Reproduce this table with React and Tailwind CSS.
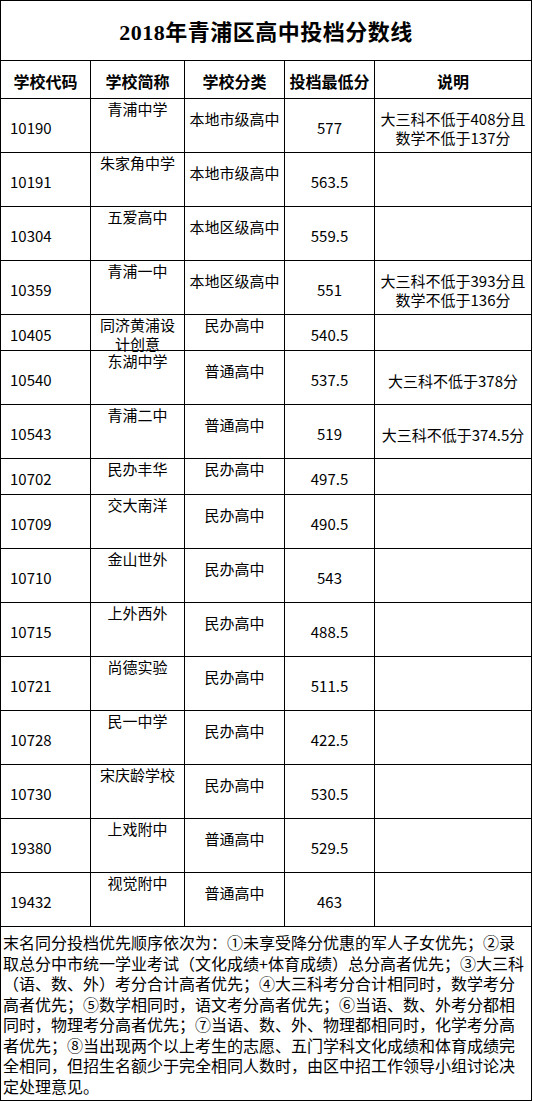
import React from "react";

const rows = [
  { code: "10190", name: ["青浦中学"], cat: "本地市级高中", score: "577", note: ["大三科不低于408分且", "数学不低于137分"] },
  { code: "10191", name: ["朱家角中学"], cat: "本地市级高中", score: "563.5" },
  { code: "10304", name: ["五爱高中"], cat: "本地区级高中", score: "559.5" },
  { code: "10359", name: ["青浦一中"], cat: "本地区级高中", score: "551", note: ["大三科不低于393分且", "数学不低于136分"] },
  { code: "10405", name: ["同济黄浦设", "计创意"], cat: "民办高中", score: "540.5", short: true },
  { code: "10540", name: ["东湖中学"], cat: "普通高中", score: "537.5", note: ["大三科不低于378分"] },
  { code: "10543", name: ["青浦二中"], cat: "普通高中", score: "519", note: ["大三科不低于374.5分"] },
  { code: "10702", name: ["民办丰华"], cat: "民办高中", score: "497.5", short: true },
  { code: "10709", name: ["交大南洋"], cat: "民办高中", score: "490.5" },
  { code: "10710", name: ["金山世外"], cat: "民办高中", score: "543" },
  { code: "10715", name: ["上外西外"], cat: "民办高中", score: "488.5" },
  { code: "10721", name: ["尚德实验"], cat: "民办高中", score: "511.5" },
  { code: "10728", name: ["民一中学"], cat: "民办高中", score: "422.5" },
  { code: "10730", name: ["宋庆龄学校"], cat: "民办高中", score: "530.5" },
  { code: "19380", name: ["上戏附中"], cat: "普通高中", score: "529.5" },
  { code: "19432", name: ["视觉附中"], cat: "普通高中", score: "463" },
];

const footer = [
  "末名同分投档优先顺序依次为：①未享受降分优惠的军人子女优先；②录",
  "取总分中市统一学业考试（文化成绩+体育成绩）总分高者优先；③大三科",
  "（语、数、外）考分合计高者优先；④大三科考分合计相同时，数学考分",
  "高者优先；⑤数学相同时，语文考分高者优先；⑥当语、数、外考分都相",
  "同时，物理考分高者优先；⑦当语、数、外、物理都相同时，化学考分高",
  "者优先；⑧当出现两个以上考生的志愿、五门学科文化成绩和体育成绩完",
  "全相同，但招生名额少于完全相同人数时，由区中招工作领导小组讨论决",
  "定处理意见。",
];

export default function App() {
  return (
    <div className="bg-white min-h-[1101px] text-black font-['Noto_Sans_CJK_SC',sans-serif]">
      <div className="w-[532px] border-l border-t border-black">
        {/* title */}
        <div className="h-[60px] border-b border-r border-black flex items-center justify-center pt-[3px]">
          <span className="text-[22px] font-bold font-['Liberation_Serif','Noto_Sans_CJK_SC',serif] tracking-[0.5px]">
            2018年青浦区高中投档分数线
          </span>
        </div>
        {/* header */}
        <div className="h-[38px] border-b border-black flex text-[16px] font-bold">
          <div className="w-[90px] border-r border-black flex items-center justify-center pt-[2px]">学校代码</div>
          <div className="w-[94px] border-r border-black flex items-center justify-center pt-[2px]">学校简称</div>
          <div className="w-[100px] border-r border-black flex items-center justify-center pt-[2px]">学校分类</div>
          <div className="w-[90px] border-r border-black flex items-center justify-center pt-[2px]">投档最低分</div>
          <div className="w-[157px] border-r border-black flex items-center justify-center pt-[2px]">说明</div>
        </div>
        {/* data rows */}
        {rows.map((r) => (
          <div
            key={r.code}
            className={`${r.short ? "h-[36px]" : "h-[54px]"} border-b border-black flex text-[15px]`}
          >
            <div className="w-[90px] border-r border-black flex items-center pl-[9px] pt-[5px]">{r.code}</div>
            <div
              className={`w-[94px] border-r border-black flex flex-col items-center ${
                r.name.length > 1 ? "leading-[19px]" : "leading-[20px]"
              }`}
            >
              {r.name.map((n) => (
                <div key={n} className="whitespace-nowrap">{n}</div>
              ))}
            </div>
            <div
              className={`w-[100px] border-r border-black text-center leading-[20px] whitespace-nowrap ${
                r.short ? "pt-0" : "pt-[10px]"
              }`}
            >
              {r.cat}
            </div>
            <div className="w-[90px] border-r border-black flex items-center justify-center pt-[5px]">{r.score}</div>
            <div className="w-[157px] border-r border-black flex flex-col items-center justify-center pt-[5px] leading-[19px]">
              {(r.note || []).map((n) => (
                <div key={n} className="whitespace-nowrap">{n}</div>
              ))}
            </div>
          </div>
        ))}
        {/* footer */}
        <div className="h-[174px] border-b border-r border-black pl-[2px] pt-[5px] text-[16px] leading-[20.5px]">
          {footer.map((l) => (
            <div key={l} className="whitespace-nowrap">{l}</div>
          ))}
        </div>
      </div>
    </div>
  );
}
